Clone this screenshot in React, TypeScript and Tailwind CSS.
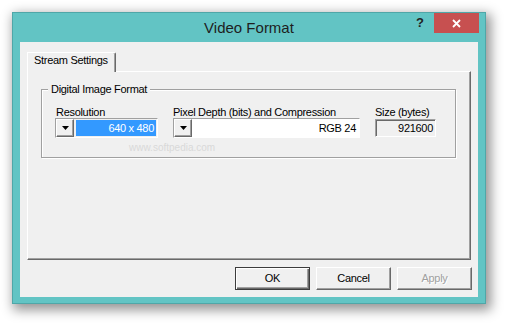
const F = { fontFamily: '"Liberation Sans", Arial, sans-serif' };

function DownArrow() {
  return (
    <svg width="7" height="4" viewBox="0 0 7 4" className="block">
      <path d="M0 0H7L3.5 4Z" fill="#000" />
    </svg>
  );
}

function ComboButton() {
  return (
    <div className="w-[18px] h-full shrink-0 bg-[#f0f0f0] border-t border-l border-white border-r border-b border-r-[#696969] border-b-[#696969] shadow-[inset_-1px_-1px_0_#a0a0a0] flex items-center justify-center pb-[1px]">
      <DownArrow />
    </div>
  );
}

function Button({ label, def, disabled }: { label: string; def?: boolean; disabled?: boolean }) {
  return (
    <div
      className={
        def
          ? "w-[75px] h-[23px] bg-[#f0f0f0] border border-[#3c3c3c] shadow-[inset_1px_1px_0_#fff,inset_-1px_-1px_0_#696969,inset_-2px_-2px_0_#a0a0a0] flex items-center justify-center text-[11px] tracking-[-0.3px] text-black"
          : "w-[75px] h-[23px] bg-[#f0f0f0] border-t border-l border-white border-r border-b border-r-[#696969] border-b-[#696969] shadow-[inset_-1px_-1px_0_#a0a0a0] flex items-center justify-center text-[11px] tracking-[-0.3px] text-black"
      }
    >
      <span
        className={disabled ? "text-[#a0a0a0] [text-shadow:1px_1px_0_#fff]" : ""}
      >
        {label}
      </span>
    </div>
  );
}

export default function App() {
  return (
    <div className="w-[506px] h-[325px] bg-white pt-[12px] pl-[12px] overflow-hidden" style={F}>
      <div className="w-[474px] h-[292px] bg-[#62c4c4] border border-[#4fa7a8] shadow-[3px_4px_11px_2px_rgba(0,0,0,0.42)] flex flex-col">
        {/* Title bar */}
        <div className="h-[29px] shrink-0 grid grid-cols-[1fr_auto_1fr]">
          <div />
          <div className="text-[15px] leading-[29px] text-[#1e1e1e]">Video Format</div>
          <div className="flex justify-end items-start">
            <span className="text-[13px] leading-[20px] font-bold text-[#222] mr-[10px]">?</span>
            <div className="w-[45px] h-[20px] bg-[#c75050] mr-[6px] flex items-center justify-center">
              <svg width="9" height="9" viewBox="0 0 9 9">
                <path d="M1 1L8 8M8 1L1 8" stroke="#fff" strokeWidth="1.8" />
              </svg>
            </div>
          </div>
        </div>

        {/* Client area */}
        <div className="mx-[7px] h-[255px] bg-[#f0f0f0] pt-[10px] px-[7px] flex flex-col text-[11px] tracking-[-0.3px] text-black">
          {/* Tab */}
          <div className="relative z-10 w-[89px] h-[20px] bg-[#f0f0f0] border-t border-l border-white border-r border-r-[#696969] shadow-[inset_-1px_0_0_#a0a0a0] rounded-tr-[2px] pl-[6px] pt-[1px] leading-[13px]">
            Stream Settings
          </div>

          {/* Panel */}
          <div className="-mt-[1px] w-[444px] h-[189px] border-t border-l border-white border-r border-b border-r-[#696969] border-b-[#696969] shadow-[inset_-1px_-1px_0_#a0a0a0] pl-[13px] pt-[17px]">
            {/* Group box */}
            <div className="relative w-[415px] h-[69px] border border-[#a0a0a0] shadow-[inset_1px_1px_0_#fff,1px_1px_0_#fff] pl-[13px] pt-[16px] flex gap-[15px]">
              <span className="absolute -top-[7px] left-[6px] bg-[#f0f0f0] px-[3px] leading-[13px]">
                Digital Image Format
              </span>
              <span className="absolute top-[52px] left-[87px] text-[10px] tracking-[0px] text-[#d9d9d9] leading-[12px]">
                www.softpedia.com
              </span>

              {/* Resolution */}
              <div className="flex flex-col w-[103px]">
                <div className="leading-[12px] h-[12px] pl-[1px]">Resolution</div>
                <div className="h-[20px] flex border-t border-l border-[#a0a0a0] border-r border-b border-r-white border-b-white">
                  <ComboButton />
                  <div className="flex-1 m-[1px] ml-[2px] bg-[#3399ff] text-white text-right pr-[2px] leading-[16px]">
                    640 x 480
                  </div>
                </div>
              </div>

              {/* Pixel depth */}
              <div className="flex flex-col w-[187px]">
                <div className="leading-[12px] h-[12px]">Pixel Depth (bits) and Compression</div>
                <div className="h-[20px] flex border-t border-l border-[#a0a0a0] border-r border-b border-r-white border-b-white bg-white">
                  <ComboButton />
                  <div className="flex-1 bg-white text-black text-right pr-[3px] leading-[18px]">RGB 24</div>
                </div>
              </div>

              {/* Size */}
              <div className="flex flex-col w-[61px]">
                <div className="leading-[12px] h-[12px]">Size (bytes)</div>
                <div className="mt-[1px] h-[18px] border-t border-l border-[#a0a0a0] border-r border-b border-r-white border-b-white shadow-[inset_1px_1px_0_#696969] bg-[#f0f0f0] text-right pr-[2px] leading-[16px]">
                  921600
                </div>
              </div>
            </div>
          </div>

          {/* Buttons */}
          <div className="mt-[7px] flex justify-end gap-[6px] -mr-[1px]">
            <Button label="OK" def />
            <Button label="Cancel" />
            <Button label="Apply" disabled />
          </div>
        </div>
      </div>
    </div>
  );
}
